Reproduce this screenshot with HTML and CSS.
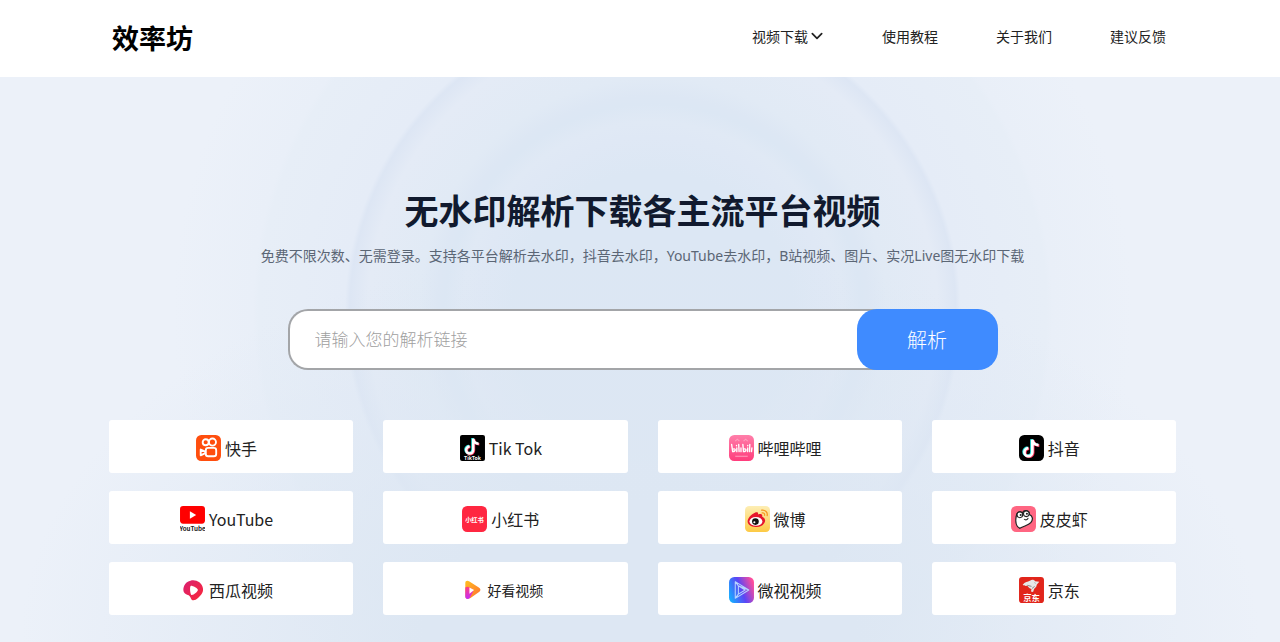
FILE: index.html
```html
<!DOCTYPE html>
<html lang="zh-CN">
  <head>
    <meta charset="utf-8">
    <meta name="viewport" content="width=device-width, initial-scale=1">
    <title>效率坊</title>
    <link rel="stylesheet" href="styles.css">
  </head>
  <body>
    <header class="header">
      <a href="#" class="logo">效率坊</a>
      <nav class="nav">
        <a href="#">视频下载<svg class="chevron" viewBox="0 0 12 12"><path d="M2 4l4 4 4-4" fill="none" stroke="#222" stroke-width="1.5" stroke-linecap="round" stroke-linejoin="round"/></svg></a>
        <a href="#">使用教程</a>
        <a href="#">关于我们</a>
        <a href="#">建议反馈</a>
      </nav>
    </header>
    <main class="hero">
      <h1 class="title">无水印解析下载各主流平台视频</h1>
      <p class="subtitle">免费不限次数、无需登录。支持各平台解析去水印，抖音去水印，YouTube去水印，B站视频、图片、实况Live图无水印下载</p>
      <form class="search">
        <input type="text" class="search-input" placeholder="请输入您的解析链接" aria-label="解析链接">
        <button type="button" class="search-btn">解析</button>
      </form>
      <div class="platforms">
        <a href="#" class="card">
          <svg class="icon" viewBox="0 0 24 25">
            <rect width="24" height="25" rx="5" fill="#ff4e0e"/>
            <g fill="none" stroke="#fff" stroke-width="1.8" stroke-linejoin="round">
              <circle cx="9.3" cy="7" r="2.9"/>
              <circle cx="15.8" cy="6.8" r="3.4"/>
              <rect x="9.4" y="12.4" width="10" height="8" rx="2.2"/>
              <path d="M9 16l-4.500-2v5.500l4.500-2"/>
            </g>
          </svg>
          <span>快手</span>
        </a>
        <a href="#" class="card">
          <svg class="icon" viewBox="0 0 24 25">
            <rect width="24" height="25" rx="2" fill="#000"/>
            <g fill="none" stroke-width="2.4">
              <path d="M12 3v11a3.4 3.4 0 1 1-3.4-3.4M12 3c.4 3 2.2 4.8 5.2 5" stroke="#25e9e4"/>
              <path d="M13.4 4v11a3.4 3.4 0 1 1-3.4-3.4M13.4 4c.4 3 2.2 4.8 5.2 5" stroke="#fe2c55"/>
              <path d="M12.7 3.5v11a3.4 3.4 0 1 1-3.4-3.4M12.7 3.5c.4 3 2.2 4.8 5.2 5" stroke="#fff"/>
            </g>
            <text x="12" y="24" class="icon-text tiktok-text">TikTok</text>
          </svg>
          <span>Tik Tok</span>
        </a>
        <a href="#" class="card">
          <svg class="icon" viewBox="0 0 24 25">
            <defs><linearGradient id="bili" x1="0" y1="0" x2="0" y2="1"><stop offset="0" stop-color="#ff7faa"/><stop offset="1" stop-color="#ff3c7c"/></linearGradient></defs>
            <rect width="24" height="25" rx="5" fill="url(#bili)"/>
            <path d="M6 6l2-2 2 2M14 6l2-2 2 2M6 20.5h12" fill="none" stroke="#ff9dbd"/>
            <g fill="none" stroke="#fff" stroke-width="1.3" stroke-linecap="round">
              <path d="M2.5 9l1 7c3 0 3.5-3.5.3-2.5M7.5 12.5v3.5M7.2 10v.3M9.3 9l.4 7M11.5 12.5v3.5"/>
              <path d="M13.3 9l.6 7c3 0 3.3-3.5.2-2.5M18 12.5l-.2 3.5M18 10v.3M20 9l-.3 7M22 12.5l-.4 3.5"/>
            </g>
          </svg>
          <span>哔哩哔哩</span>
        </a>
        <a href="#" class="card">
          <svg class="icon" viewBox="0 0 24 25">
            <rect width="24" height="25" rx="5" fill="#000"/>
            <g fill="none" stroke-width="2.6">
              <path d="M12 4v12a3.8 3.8 0 1 1-3.8-3.8M12 4c.4 3 2.4 5 6 5.2" stroke="#25e9e4"/>
              <path d="M13.6 5v12a3.8 3.8 0 1 1-3.8-3.8M13.6 5c.4 3 2.4 5 6 5.2" stroke="#fe2c55"/>
              <path d="M12.8 4.5v12a3.8 3.8 0 1 1-3.8-3.8M12.8 4.5c.4 3 2.4 5 6 5.2" stroke="#fff"/>
            </g>
          </svg>
          <span>抖音</span>
        </a>
        <a href="#" class="card">
          <svg class="icon" viewBox="0 0 24 25">
            <rect width="24" height="17" rx="3" fill="#f00"/>
            <path d="M9.5 5l6 3.6-6 3.6z" fill="#fff"/>
            <text x="12" y="24" class="icon-text youtube-text">YouTube</text>
          </svg>
          <span>YouTube</span>
        </a>
        <a href="#" class="card">
          <svg class="icon" viewBox="0 0 24 25">
            <rect width="24" height="25" rx="5" fill="#ff2741"/>
            <text x="12" y="15" class="icon-text red-text">小红书</text>
          </svg>
          <span>小红书</span>
        </a>
        <a href="#" class="card">
          <svg class="icon" viewBox="0 0 24 25">
            <defs><linearGradient id="weibo" x1="0" y1="0" x2="0" y2="1"><stop offset="0" stop-color="#fdeeb5"/><stop offset="1" stop-color="#fdca45"/></linearGradient></defs>
            <rect width="24" height="25" rx="4" fill="url(#weibo)"/>
            <path d="M9.5 6.5c2-1 3.5-.4 3 1.6 2.500-1 4.700-.3 4 2.200 5 1.700 3.500 9.500-5.500 9.900C6 20.500 2.300 18 2.500 14.500 2.800 11.500 6 8 9.500 6.500z" fill="#e6162d"/>
            <ellipse cx="10.5" cy="14.8" rx="6.2" ry="4.3" fill="#fff"/>
            <circle cx="10" cy="15" r="3.2" fill="#111"/>
            <circle cx="9" cy="15.6" r="1" fill="#fff"/>
            <path d="M16 4c3.500-.5 6 2 5.300 5.300M16.500 6.600c1.700-.2 2.600.8 2.300 2.300" fill="none" stroke="#f59a23" stroke-width="1.2" stroke-linecap="round"/>
          </svg>
          <span>微博</span>
        </a>
        <a href="#" class="card">
          <svg class="icon" viewBox="0 0 24 25">
            <rect width="24" height="25" rx="5" fill="#ff6682"/>
            <path d="M5 10c0-4 4-6 6-3 1-4 7-3 6.500 1 3.500 1.500 4 5 1.500 8-2.500 3-7 3-10.500 5.500C5 20 4 15 5 10z" fill="#fff" stroke="#222" stroke-width="1.2"/>
            <g fill="#fff" stroke="#222">
              <circle cx="8.5" cy="8.5" r="2.7"/>
              <circle cx="14.7" cy="7.5" r="2.7"/>
              <path d="M12.5 12.5c1.5 1.5 3.5.8 4-1" fill="none"/>
            </g>
            <circle cx="9.3" cy="8.7" r="1" fill="#222"/>
            <circle cx="15.3" cy="7.5" r="1" fill="#222"/>
          </svg>
          <span>皮皮虾</span>
        </a>
        <a href="#" class="card">
          <svg class="icon" viewBox="0 0 24 25">
            <defs><linearGradient id="xigua" x1="0" y1="0" x2="1" y2="1"><stop offset="0" stop-color="#d91f72"/><stop offset="1" stop-color="#fa2838"/></linearGradient></defs>
            <path d="M10 3.500c5-1.500 11 1.500 12 7 .8 4.500-2 7-5 10-2 2-5.500 3-6.500.2-.7-2-1.200-3-3.700-3.700C3 16 2.500 12 4 8.500 5.200 5.500 7 4.200 10 3.500z" fill="url(#xigua)"/>
            <path d="M10.500 8.300c2 0 6.500 2.200 6.700 4 .1 1.800-4.200 5.200-6 5-1.500-.2-2.200-8.800-.7-9z" fill="#fff"/>
          </svg>
          <span>西瓜视频</span>
        </a>
        <a href="#" class="card card-small">
          <svg class="icon" viewBox="0 0 24 25">
            <defs>
              <linearGradient id="haokan" x1="0" y1="0" x2="1" y2="1"><stop offset="0" stop-color="#ffc01e"/><stop offset="1" stop-color="#ff6c32"/></linearGradient>
              <linearGradient id="haokan2" x1="0" y1="0" x2="0" y2="1"><stop offset="0" stop-color="#ff407c"/><stop offset="1" stop-color="#c52bfa"/></linearGradient>
            </defs>
            <path d="M7 6c0-2.500 2-2.800 4-1.700l9 5.800c2 1.200 2 3 .2 4.300L12 20.200c-2 1.200-5 1.100-5-1.700z" fill="url(#haokan)"/>
            <path d="M7 10c2-1.500 4-.5 6.500 1.500 1.500 1 1.500 2.500.5 3.700L11 20.500c-2 1.500-4 .3-4-2z" fill="url(#haokan2)"/>
            <path d="M11 10l4.500 2.500L11 16z" fill="#fff"/>
          </svg>
          <span>好看视频</span>
        </a>
        <a href="#" class="card">
          <svg class="icon" viewBox="0 0 24 25">
            <defs><linearGradient id="weishi" x1="0" y1=".7" x2="1" y2=".3"><stop offset="0" stop-color="#19a9ff"/><stop offset=".5" stop-color="#5c45f5"/><stop offset="1" stop-color="#ff4d9b"/></linearGradient></defs>
            <rect width="24" height="25" rx="5" fill="url(#weishi)"/>
            <path d="M6 4.500l13 8-13 8zM9 8.500l6.500 4-6.500 4zM6 4.500l3 4 10 4M6 20.500l3-4" fill="none" stroke="#b5d4ff" stroke-linejoin="round"/>
          </svg>
          <span>微视视频</span>
        </a>
        <a href="#" class="card">
          <svg class="icon" viewBox="0 0 24 25">
            <rect width="24" height="25" rx="3" fill="#e1251b"/>
            <path d="M3.500 7.500c2-3 5-3 7-4 2-1.500 4-1 5 .5l4 .5-2.500 3c0 2-1.500 3-2.500 4l-1 3-2-.5.5-2.500c-2-.3-3-1.500-4-3-1.500.2-3 .2-4.500-1z" fill="#e8e8e8"/>
            <path d="M8 8l4 1M15 5.500l.8.500M12.500 11l2.500-2" stroke="#777" stroke-width=".8"/>
            <text x="12" y="23" class="icon-text jd-text">京东</text>
          </svg>
          <span>京东</span>
        </a>
      </div>
    </main>
  </body>
</html>
```
FILE: styles.css
```css
* {
  box-sizing: border-box;
}
body {
  margin: 0;
  min-height: 100vh;
  display: flex;
  flex-direction: column;
  font-family: "Noto Sans", "Noto Sans CJK SC", sans-serif;
  color: #222;
}
a {
  color: inherit;
  text-decoration: none;
}

/* Header */
.header {
  display: flex;
  align-items: center;
  justify-content: space-between;
  height: 77px;
  padding: 0 114px 2px 112px;
  background: #fff;
}
.logo {
  font-size: 27px;
  font-weight: bold;
  color: #000;
}
.nav {
  display: flex;
  gap: 58px;
  padding-bottom: 4px;
  font-size: 14px;
}
.nav a {
  display: flex;
  align-items: center;
}
.chevron {
  width: 14px;
  height: 14px;
  margin-left: 2px;
}

/* Hero */
.hero {
  flex: 1;
  padding: 110px 104px 26px 109px;
  background:
    radial-gradient(ellipse 620px 400px at 50% 100%, #dde7f3 35%, rgba(221, 231, 243, 0) 100%),
    radial-gradient(circle at 51% 235px, #dce7f4 140px, #dfe8f5 175px, #e0e9f5 190px, #dce7f4 208px, #dde7f4 216px, #e1eaf5 234px, #e4ebf6 285px, #dde6f4 303px, #e5ecf7 308px, #e7eef7 394px, #e9eff8 400px, rgba(236, 241, 249, 0) 480px),
    #ecf1f9;
}
.title {
  margin: 0;
  font-size: 34px;
  line-height: 48px;
  text-align: center;
  color: #111a2e;
}
.subtitle {
  margin: 9px 0 0;
  font-size: 14px;
  line-height: 24px;
  text-align: center;
  color: #5b6675;
}
.search {
  display: flex;
  width: 100%;
  max-width: 710px;
  height: 61px;
  margin: 41px auto 50px;
}
.search-input {
  flex: 1;
  min-width: 0;
  margin-right: -22px;
  padding: 0 25px;
  border: 2px solid #a3a5a8;
  border-right: 0;
  border-radius: 20px 0 0 20px;
  background: #fff;
  font-family: inherit;
  font-size: 17px;
  font-weight: 300;
}
.search-input::placeholder {
  color: #a0a0a0;
}
.search-btn {
  position: relative;
  width: 141px;
  border: 0;
  border-radius: 20px;
  background: #3f8bff;
  color: #fff;
  font-family: inherit;
  font-size: 20px;
  font-weight: 300;
}

/* Platform cards */
.platforms {
  display: grid;
  grid-template-columns: repeat(4, 1fr);
  gap: 18px 30px;
}
.card {
  display: flex;
  align-items: center;
  justify-content: center;
  gap: 4px;
  height: 53px;
  padding: 3px 9px 0 0;
  border-radius: 3px;
  background: #fff;
  font-family: "Noto Sans CJK SC", sans-serif;
  font-size: 16px;
}
.card-small {
  font-size: 14px;
}
.icon {
  width: 25px;
  height: 26px;
}
.icon-text {
  font-family: "Noto Sans CJK SC", sans-serif;
  font-weight: bold;
  text-anchor: middle;
  fill: #fff;
}
.tiktok-text {
  font-size: 5px;
}
.youtube-text {
  font-size: 6px;
  fill: #222;
}
.red-text {
  font-size: 6px;
}
.jd-text {
  font-size: 8px;
}
```
